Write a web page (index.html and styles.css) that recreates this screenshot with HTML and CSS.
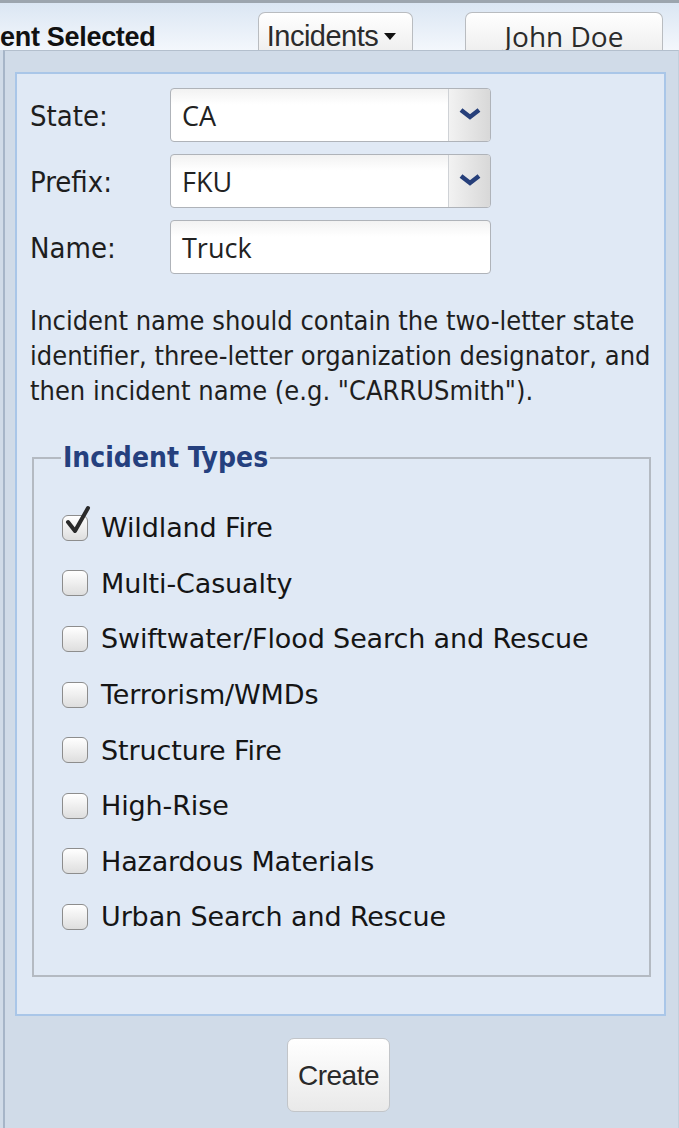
FILE: index.html
```html
<!DOCTYPE html>
<html>
<head>
<meta charset="utf-8">
<link rel="stylesheet" href="styles.css">
</head>
<body>
<div class="topbar">
  <div class="title">ent Selected</div>
  <div class="tbtn incidents">Incidents<span class="caret"></span></div>
  <div class="tbtn user">John Doe</div>
</div>
<div class="panel">
  <div class="inner">
    <div class="form">
      <label class="lbl">State:</label>
      <div class="select"><span class="val">CA</span><span class="arrow"><svg width="22" height="14" viewBox="0 0 22 14"><path d="M2 3 L11 10 L20 3" fill="none" stroke="#263f7a" stroke-width="4.5" stroke-linejoin="miter"/></svg></span></div>
      <label class="lbl">Prefix:</label>
      <div class="select"><span class="val">FKU</span><span class="arrow"><svg width="22" height="14" viewBox="0 0 22 14"><path d="M2 3 L11 10 L20 3" fill="none" stroke="#263f7a" stroke-width="4.5" stroke-linejoin="miter"/></svg></span></div>
      <label class="lbl">Name:</label>
      <div class="input"><span class="val">Truck</span></div>
    </div>
    <p class="help">Incident name should contain the two-letter state identifier, three-letter organization designator, and then incident name (e.g. "CARRUSmith").</p>
    <fieldset class="types">
      <legend>Incident Types</legend>
      <div class="row"><span class="cb checked"><svg class="tick" width="30" height="32" viewBox="0 0 30 32"><path d="M4 17 L11 26 L24 3" fill="none" stroke="#2a2a2a" stroke-width="4" stroke-linecap="round" stroke-linejoin="round"/></svg></span><span class="opt">Wildland Fire</span></div>
      <div class="row"><span class="cb"></span><span class="opt">Multi-Casualty</span></div>
      <div class="row"><span class="cb"></span><span class="opt">Swiftwater/Flood Search and Rescue</span></div>
      <div class="row"><span class="cb"></span><span class="opt">Terrorism/WMDs</span></div>
      <div class="row"><span class="cb"></span><span class="opt">Structure Fire</span></div>
      <div class="row"><span class="cb"></span><span class="opt">High-Rise</span></div>
      <div class="row"><span class="cb"></span><span class="opt">Hazardous Materials</span></div>
      <div class="row"><span class="cb"></span><span class="opt">Urban Search and Rescue</span></div>
    </fieldset>
  </div>
  <div class="actions">
    <div class="create">Create</div>
  </div>
</div>
</body>
</html>
```
FILE: styles.css
```css
html, body { margin: 0; padding: 0; }
body { width: 679px; height: 1128px; overflow: hidden; background: #d0dbe8; font-family: "Liberation Sans", Arial, sans-serif; }

.topbar {
  height: 47px;
  border-top: 3px solid #9ca5ae;
  background: linear-gradient(#dbe6f3, #f3f7fc);
  display: flex;
  align-items: flex-start;
}
.title {
  width: 258px;
  font-weight: bold;
  font-size: 27px;
  color: #111;
  padding-top: 21px;
  line-height: 27px;
  letter-spacing: -0.3px;
}
.tbtn {
  margin-top: 9px;
  height: 38px;
  box-sizing: border-box;
  border: 1px solid #b9bcc0;
  border-bottom: none;
  border-radius: 7px 7px 0 0;
  background: linear-gradient(#ffffff, #efefef);
  color: #2b2b2b;
  text-align: center;
}
.incidents { width: 155px; font-size: 29px; line-height: 31px; padding: 8px 8px 0 0; letter-spacing: -0.5px; font-family: "Liberation Sans", Arial, sans-serif; }
.caret {
  display: inline-block;
  width: 0; height: 0;
  border-left: 6px solid transparent;
  border-right: 6px solid transparent;
  border-top: 7px solid #111;
  margin-left: 6px;
  vertical-align: 6px;
}
.user { width: 198px; margin-left: 52px; font-size: 28px; font-family: "Open Sans", sans-serif; line-height: 30px; padding-top: 8px; }

.panel {
  margin-left: 3px;
  border-left: 2px solid #a6b5c8;
  border-top: 1px solid #b3bfcd;
  border-right: 1px solid #c3cfdc;
  background: #d0dbe8;
  padding-top: 21px;
  height: 1078px;
  box-sizing: border-box;
  position: relative;
}
.inner {
  margin: 0 12px 0 10px;
  border: 2px solid #a9c6e8;
  background: #e0e9f5;
  padding: 14px 13px 37px 13px;
}
.form {
  display: grid;
  grid-template-columns: 140px 321px;
  row-gap: 12px;
  align-items: center;
}
.lbl {
  font-family: "DejaVu Sans Condensed", "DejaVu Sans", sans-serif;
  font-size: 29px;
  color: #1e1e1e;
  padding-top: 2px;
}
.select, .input {
  height: 54px;
  box-sizing: border-box;
  border: 1.5px solid #afb3b9;
  border-radius: 4px;
  background: linear-gradient(#f2f2f2, #ffffff 30%);
  display: flex;
  align-items: center;
  overflow: hidden;
}
.val {
  flex: 1;
  padding-left: 11px;
  font-family: "Open Sans", sans-serif;
  font-size: 27px;
  color: #222;
}
.arrow {
  width: 42px;
  align-self: stretch;
  border-left: 1px solid #cfd2d6;
  background: linear-gradient(90deg, #f2f2f2, #d8d8d8);
  display: flex;
  align-items: center;
  justify-content: center;
  padding-bottom: 2px;
  box-sizing: border-box;
}
.help {
  margin: 29px 0 0 0;
  font-family: "DejaVu Sans Condensed", "DejaVu Sans", sans-serif;
  font-size: 27px;
  line-height: 35px;
  color: #1e1e1e;
}
.types {
  margin: 35px 0 0 2px;
  border: 2px solid #b4bac2;
  padding: 27px 0 30px 28px;
  box-sizing: border-box;
}
.types legend {
  padding: 0 2px;
  margin-left: -1px;
  line-height: 30px;
  font-family: "DejaVu Sans Condensed", "DejaVu Sans", sans-serif;
  font-weight: bold;
  font-size: 28px;
  color: #25407e;
}
.row {
  display: flex;
  align-items: center;
  height: 55.6px;
}
.cb {
  position: relative;
  width: 26px; height: 26px;
  box-sizing: border-box;
  border: 1.5px solid #8d8d8d;
  border-radius: 6px;
  background: linear-gradient(#ffffff, #dedede);
  margin-right: 13px;
  flex: none;
}
.tick { position: absolute; left: 1px; top: -11px; }
.opt {
  font-family: "DejaVu Sans", sans-serif;
  font-size: 27px;
  color: #151515;
  letter-spacing: -0.12px;
}
.actions {
  padding: 22px 0 0 282px;
}
.create {
  width: 103px;
  height: 74px;
  box-sizing: border-box;
  border: 1.5px solid #c2c5c9;
  border-radius: 7px;
  background: linear-gradient(#ffffff, #e9e9e9);
  font-size: 28px;
  color: #2a2a2a;
  text-align: center;
  line-height: 74px;
  letter-spacing: -0.5px;
}
```
